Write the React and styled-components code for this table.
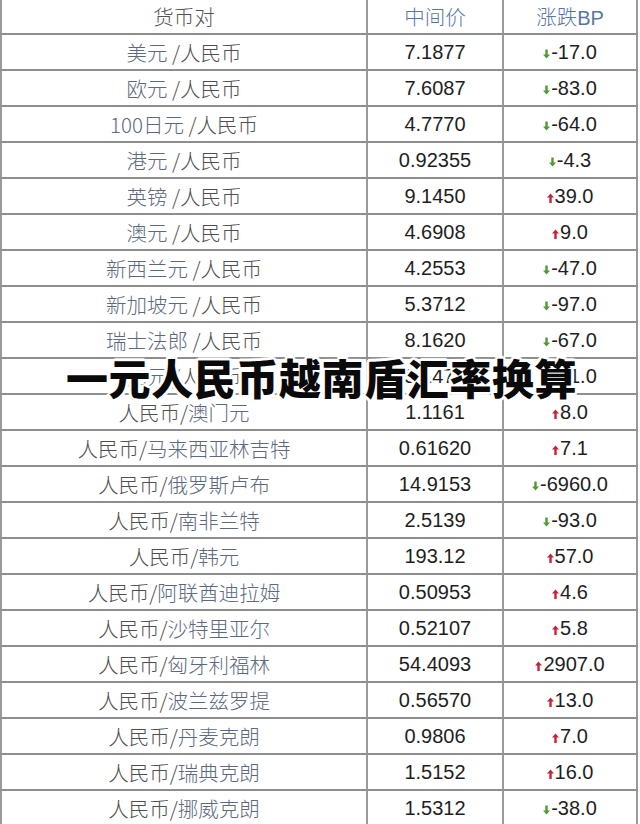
import styled, { createGlobalStyle } from "styled-components";

const GlobalStyle = createGlobalStyle`
  html, body {
    margin: 0;
    padding: 0;
    background: #ffffff;
  }
  body {
    font-family: "Liberation Sans", "Noto Sans CJK SC", sans-serif;
  }
`;

const rows = [
  ["美元", " /人民币", "7.1877", "down", "-17.0"],
  ["欧元", " /人民币", "7.6087", "down", "-83.0"],
  ["100日元", " /人民币", "4.7770", "down", "-64.0"],
  ["港元", " /人民币", "0.92355", "down", "-4.3"],
  ["英镑", " /人民币", "9.1450", "up", "39.0"],
  ["澳元", " /人民币", "4.6908", "up", "9.0"],
  ["新西兰元", " /人民币", "4.2553", "down", "-47.0"],
  ["新加坡元", " /人民币", "5.3712", "down", "-97.0"],
  ["瑞士法郎", " /人民币", "8.1620", "down", "-67.0"],
  ["加元", " /人民币", "5.1475", "down", "-41.0"],
  ["人民币/", "澳门元", "1.1161", "up", "8.0"],
  ["人民币/", "马来西亚林吉特", "0.61620", "up", "7.1"],
  ["人民币/", "俄罗斯卢布", "14.9153", "down", "-6960.0"],
  ["人民币/", "南非兰特", "2.5139", "down", "-93.0"],
  ["人民币/", "韩元", "193.12", "up", "57.0"],
  ["人民币/", "阿联酋迪拉姆", "0.50953", "up", "4.6"],
  ["人民币/", "沙特里亚尔", "0.52107", "up", "5.8"],
  ["人民币/", "匈牙利福林", "54.4093", "up", "2907.0"],
  ["人民币/", "波兰兹罗提", "0.56570", "up", "13.0"],
  ["人民币/", "丹麦克朗", "0.9806", "up", "7.0"],
  ["人民币/", "瑞典克朗", "1.5152", "up", "16.0"],
  ["人民币/", "挪威克朗", "1.5312", "down", "-38.0"],
];

const Page = styled.div`
  position: relative;
  width: 640px;
  height: 824px;
  overflow: hidden;
  background: #fff;
`;

const Table = styled.table`
  border-collapse: collapse;
  table-layout: fixed;
  width: 636px;
  margin-top: -2px;
`;

const Col = styled.col`
  width: ${(p) => p.$w}px;
`;

const Row = styled.tr`
  height: 36px;
`;

const HeadCell = styled.th`
  font-weight: 300;
  font-size: 20.5px;
  font-family: "Noto Sans CJK SC", sans-serif;
  color: ${(p) => (p.$blue ? "#5877a6" : "#555")};
  text-align: center;
  padding: 0;
  border-left: 2px solid #9a9a9a;
  border-right: 2px solid #9a9a9a;
  border-bottom: 2px solid #8e8e8e;
`;

const Latin = styled.span`
  font-family: "Liberation Sans", sans-serif;
  font-weight: 400;
  font-size: 20px;
`;

const Cell = styled.td`
  padding: 0;
  text-align: center;
  vertical-align: middle;
  border: 2px solid #9a9a9a;
  border-top-color: #8e8e8e;
  border-bottom-color: #8e8e8e;
  font-size: 20px;
  color: #1e1e1e;
  white-space: nowrap;
`;

const PairText = styled.span`
  font-family: "Noto Sans CJK SC", sans-serif;
  font-size: 20.5px;
  font-weight: 300;
  color: #4f4f4f;
`;

const Foreign = styled.span`
  color: #5c6a80;
`;

const Change = styled.span`
  display: inline-flex;
  align-items: center;
  gap: 1px;
`;

const Title = styled.div`
  position: absolute;
  left: 66px;
  top: 356px;
  font-family: "Noto Sans CJK SC", sans-serif;
  font-weight: 900;
  font-size: 42px;
  line-height: 1;
  letter-spacing: 0.6px;
  color: #0a0a0a;
  white-space: nowrap;
  text-shadow: 2px 0 0 #fff, -2px 0 0 #fff, 0 2px 0 #fff, 0 -2px 0 #fff,
    2px 2px 0 #fff, -2px -2px 0 #fff, 2px -2px 0 #fff, -2px 2px 0 #fff,
    3px 0 1px #fff, -3px 0 1px #fff, 0 3px 1px #fff, 0 -3px 1px #fff;
`;

function Arrow({ dir }) {
  const up = dir === "up";
  const color = up ? "#c5233b" : "#4f9a35";
  return (
    <svg width="7" height="10" viewBox="0 0 7 10" style={{ marginTop: 3 }}>
      {up ? (
        <>
          <polygon points="3.5,0.5 7,4.5 0,4.5" fill={color} />
          <rect x="2.3" y="4" width="2.4" height="6" fill={color} />
        </>
      ) : (
        <>
          <rect x="2.3" y="0.5" width="2.4" height="5.5" fill={color} />
          <polygon points="0,5.5 7,5.5 3.5,9.5" fill={color} />
        </>
      )}
    </svg>
  );
}

export default function App() {
  return (
    <>
      <GlobalStyle />
      <Page>
        <Table>
          <colgroup>
            <Col $w={366} />
            <Col $w={136} />
            <Col $w={134} />
          </colgroup>
          <thead>
            <Row>
              <HeadCell>货币对</HeadCell>
              <HeadCell $blue>中间价</HeadCell>
              <HeadCell $blue>
                涨跌<Latin>BP</Latin>
              </HeadCell>
            </Row>
          </thead>
          <tbody>
            {rows.map(([a, b, price, dir, bp], i) => (
              <Row key={i}>
                <Cell>
                  <PairText>
                    {i < 10 ? (
                      <>
                        <Foreign>{a}</Foreign>
                        {b}
                      </>
                    ) : (
                      <>
                        {a}
                        <Foreign>{b}</Foreign>
                      </>
                    )}
                  </PairText>
                </Cell>
                <Cell>{price}</Cell>
                <Cell>
                  <Change>
                    <Arrow dir={dir} />
                    {bp}
                  </Change>
                </Cell>
              </Row>
            ))}
          </tbody>
        </Table>
        <Title>一元人民币越南盾汇率换算</Title>
      </Page>
    </>
  );
}
